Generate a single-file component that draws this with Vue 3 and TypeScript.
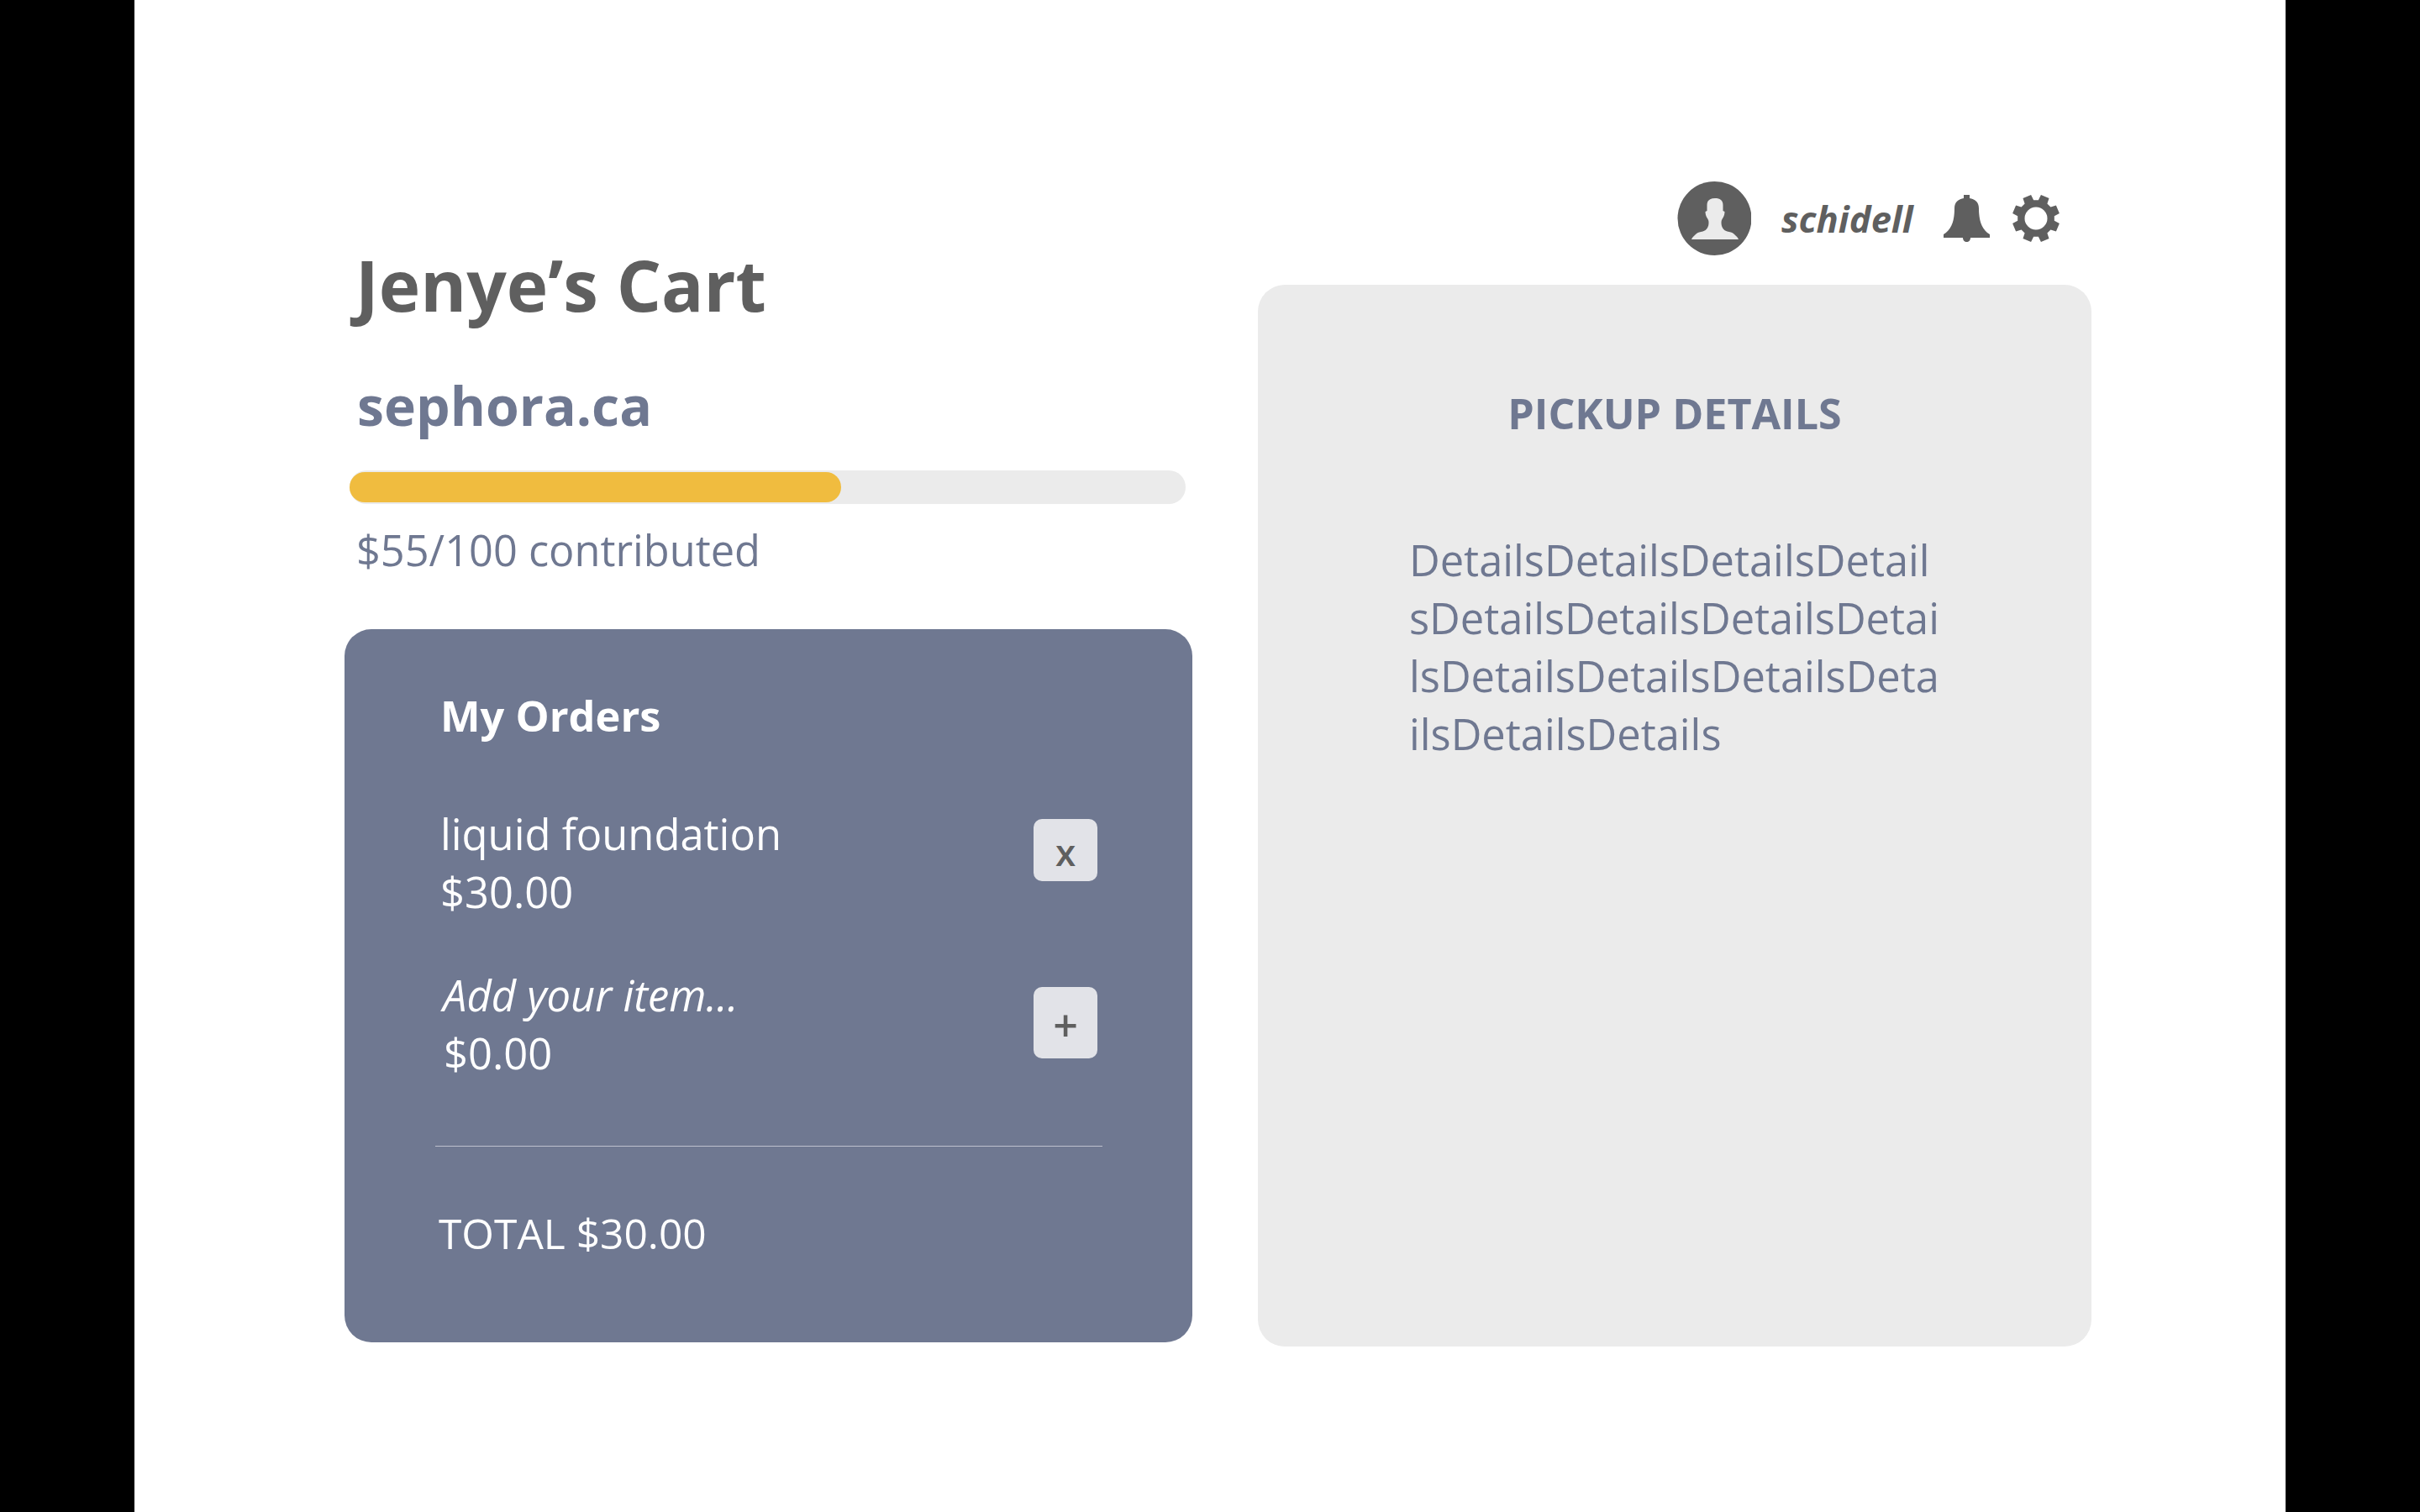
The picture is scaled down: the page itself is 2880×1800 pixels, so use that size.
<script setup lang="ts">
const details = ['DetailsDetailsDetailsDetail', 'sDetailsDetailsDetailsDetai', 'lsDetailsDetailsDetailsDeta', 'ilsDetailsDetails']

function polar(r: number, deg: number): string {
  const a = (deg * Math.PI) / 180
  return `${(28 + r * Math.sin(a)).toFixed(2)} ${(28 - r * Math.cos(a)).toFixed(2)}`
}
const pts: string[] = []
for (let i = 0; i < 8; i++) {
  const c = 22.5 + 45 * i
  pts.push(polar(22, c - 15), polar(28.5, c - 10.5), polar(28.5, c + 10.5), polar(22, c + 15))
}
const gearPath = `M${pts.join('L')}ZM28 14.500a13.500 13.500 0 1 0 0 27 13.500 13.500 0 0 0 0-27Z`
</script>

<template>
  <div class="screen">
    <div class="stage">
      <section class="left">
        <h1 class="title">Jenye’s Cart</h1>
        <h2 class="store">sephora.ca</h2>
        <div class="track"><div class="fill" style="width: 58.800%"></div></div>
        <p class="progress">$55/100 contributed</p>
        <div class="orders">
          <h3 class="orders-title">My Orders</h3>
          <div class="item first">
            <div class="item-text">
              <div>liquid foundation</div>
              <div>$30.00</div>
            </div>
            <button class="btn btn-x">x</button>
          </div>
          <div class="item second">
            <div class="item-text">
              <div class="ph">Add your item...</div>
              <div class="ph-price">$0.00</div>
            </div>
            <button class="btn btn-plus">+</button>
          </div>
          <div class="rule"></div>
          <div class="total">TOTAL $30.00</div>
        </div>
      </section>
      <section class="right">
        <header class="user">
          <svg class="avatar" viewBox="0 0 88 88">
            <circle cx="44.500" cy="44" r="44" fill="#5f5f5f" />
            <path fill="#ebebeb" d="M45 20c-6 0-9.500 2.500-9.500 8v7l-2 1c0 3 1 6 2.500 8 1 1.500 1.500 3 1.500 5 0 5-2 9-7 10.500-3 .5-6 1-8 3-2 2-4.500 3.500-5.500 6.500h56c-1-3-3.500-4.500-5.500-6.500-2-2-5-2.500-8-3-5-1.500-7-5.500-7-10.500 0-2 .5-3.500 1.500-5 1.500-2 2.500-5 2.500-8l-2-1v-7c0-5.500-3.500-8-9.500-8z" />
          </svg>
          <span class="name">schidell</span>
          <svg class="bell" viewBox="0 0 56 56">
            <path fill="#5f5f5f" d="M24 0h7v4c6 1 11 4 11 12 0 14 3 25 13 31v4H0v-4c10-6 13-17 13-31 0-8 5-11 11-12z" />
            <path fill="#5f5f5f" d="M23 51h9c0 3-2 5-4.500 5s-4.500-2-4.500-5z" />
          </svg>
          <svg class="gear" viewBox="0 0 56 56">
            <path fill="#5f5f5f" fill-rule="evenodd" :d="gearPath" />
          </svg>
        </header>
        <div class="pickup">
          <h2 class="pickup-title">PICKUP DETAILS</h2>
          <div class="details">
            <div v-for="line in details" :key="line">{{ line }}</div>
          </div>
        </div>
      </section>
    </div>
  </div>
</template>

<style>
html, body { margin: 0; background: #000; }
</style>

<style scoped>
.screen { width: 2880px; height: 1800px; background: #000; display: flex; justify-content: center; overflow: hidden; font-family: "Open Sans", sans-serif; }
.stage { width: 2560px; height: 1800px; background: #fff; display: flex; box-sizing: border-box; padding-left: 250px; }
.left { width: 1008px; display: flex; flex-direction: column; padding-top: 285px; }
.title { margin: 0 0 0 13px; font-size: 83.700px; font-weight: 700; line-height: 108px; color: #5f5f5f; }
.store { margin: 45px 0 0 15px; font-size: 64.300px; font-weight: 700; line-height: 88px; color: #6f7891; }
.track { margin: 34px 0 0 6px; width: 995px; height: 40px; border-radius: 20px; background: #ebebeb; display: flex; align-items: center; }
.fill { height: 36px; border-radius: 18px; background: #f0bc3f; }
.progress { margin: 20px 0 0 14px; font-size: 50.500px; line-height: 70px; color: #6f7891; }
.orders { margin-top: 59px; width: 1009px; height: 849px; box-sizing: border-box; border-radius: 32px; background: #6f7891; color: #fff; padding: 71px 113px 0 114px; font-size: 50.700px; line-height: 69px; }
.orders-title { margin: 0; font-size: 50.500px; font-weight: 700; line-height: 64px; }
.item { display: flex; justify-content: space-between; align-items: center; }
.first { margin-top: 74px; }
.second { margin-top: 54px; }
.ph { font-style: italic; margin-left: 3px; }
.ph-price { margin-left: 4px; }
.btn { border: 0; padding: 0; width: 76px; background: #e2e3e8; border-radius: 10px; color: #5f5f5f; font-family: inherit; font-weight: 600; font-size: 44px; line-height: 1; }
.btn-x { height: 74px; margin-bottom: 30px; padding-top: 4px; }
.btn-plus { height: 85px; margin-bottom: 3px; font-size: 52px; padding-top: 4px; }
.rule { margin: 76px 0 0 -6px; width: 794px; height: 1px; background: #bdc1ce; }
.total { margin: 69px 0 0 -2px; font-size: 49.700px; }
.right { margin-left: 79px; width: 992px; display: flex; flex-direction: column; padding-top: 216px; }
.user { display: flex; align-items: center; height: 88px; margin-left: 499px; }
.avatar { width: 88px; height: 88px; }
.name { margin-left: 36px; font-size: 43.500px; font-weight: 700; font-style: italic; color: #5f5f5f; }
.bell { margin-left: 36px; width: 56px; height: 56px; }
.gear { margin-left: 26px; width: 56px; height: 56px; }
.pickup { margin-top: 35px; height: 1264px; border-radius: 32px; background: #ebebeb; box-sizing: border-box; padding-top: 117px; color: #6f7891; }
.pickup-title { margin: 0; text-align: center; font-size: 50.200px; font-weight: 700; line-height: 72px; }
.details { margin: 104px 0 0 180px; font-size: 50.600px; line-height: 69px; }
</style>
